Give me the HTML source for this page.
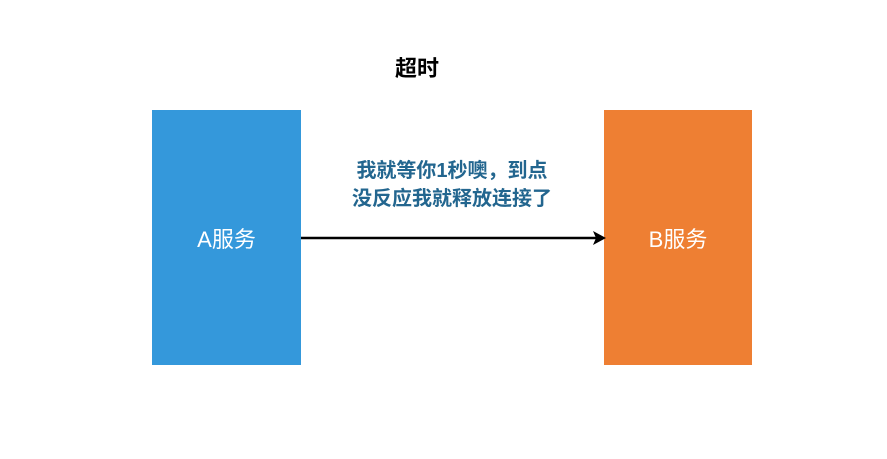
<!DOCTYPE html>
<html><head><meta charset="utf-8"><style>
body{margin:0;width:887px;height:459px;background:#fff;position:relative;overflow:hidden;font-family:"Liberation Sans","Noto Sans CJK SC",sans-serif}
.t{position:absolute;white-space:nowrap}
.box{position:absolute;top:110px;height:255px;color:#fff;font-size:22px;display:flex;align-items:center;justify-content:center}
</style></head><body>
<div class="t" style="left:395px;top:51px;font-size:22px;font-weight:bold;color:#000">超时</div>
<div class="t" style="left:302px;top:157px;width:300px;text-align:center;font-size:20px;line-height:28px;font-weight:bold;color:#23668f">我就等你1秒噢，到点<br>没反应我就释放连接了</div>
<div class="box" style="left:152px;width:149px;background:#3498db">A服务</div>
<div class="box" style="left:604px;width:148px;background:#ee7f33">B服务</div>
<svg style="position:absolute;left:0;top:0" width="887" height="459">
<line x1="301" y1="238" x2="596" y2="238" stroke="#000" stroke-width="2.5"/>
<polygon points="606,238 593,231 596,238 593,245" fill="#000"/>
</svg>
</body></html>
